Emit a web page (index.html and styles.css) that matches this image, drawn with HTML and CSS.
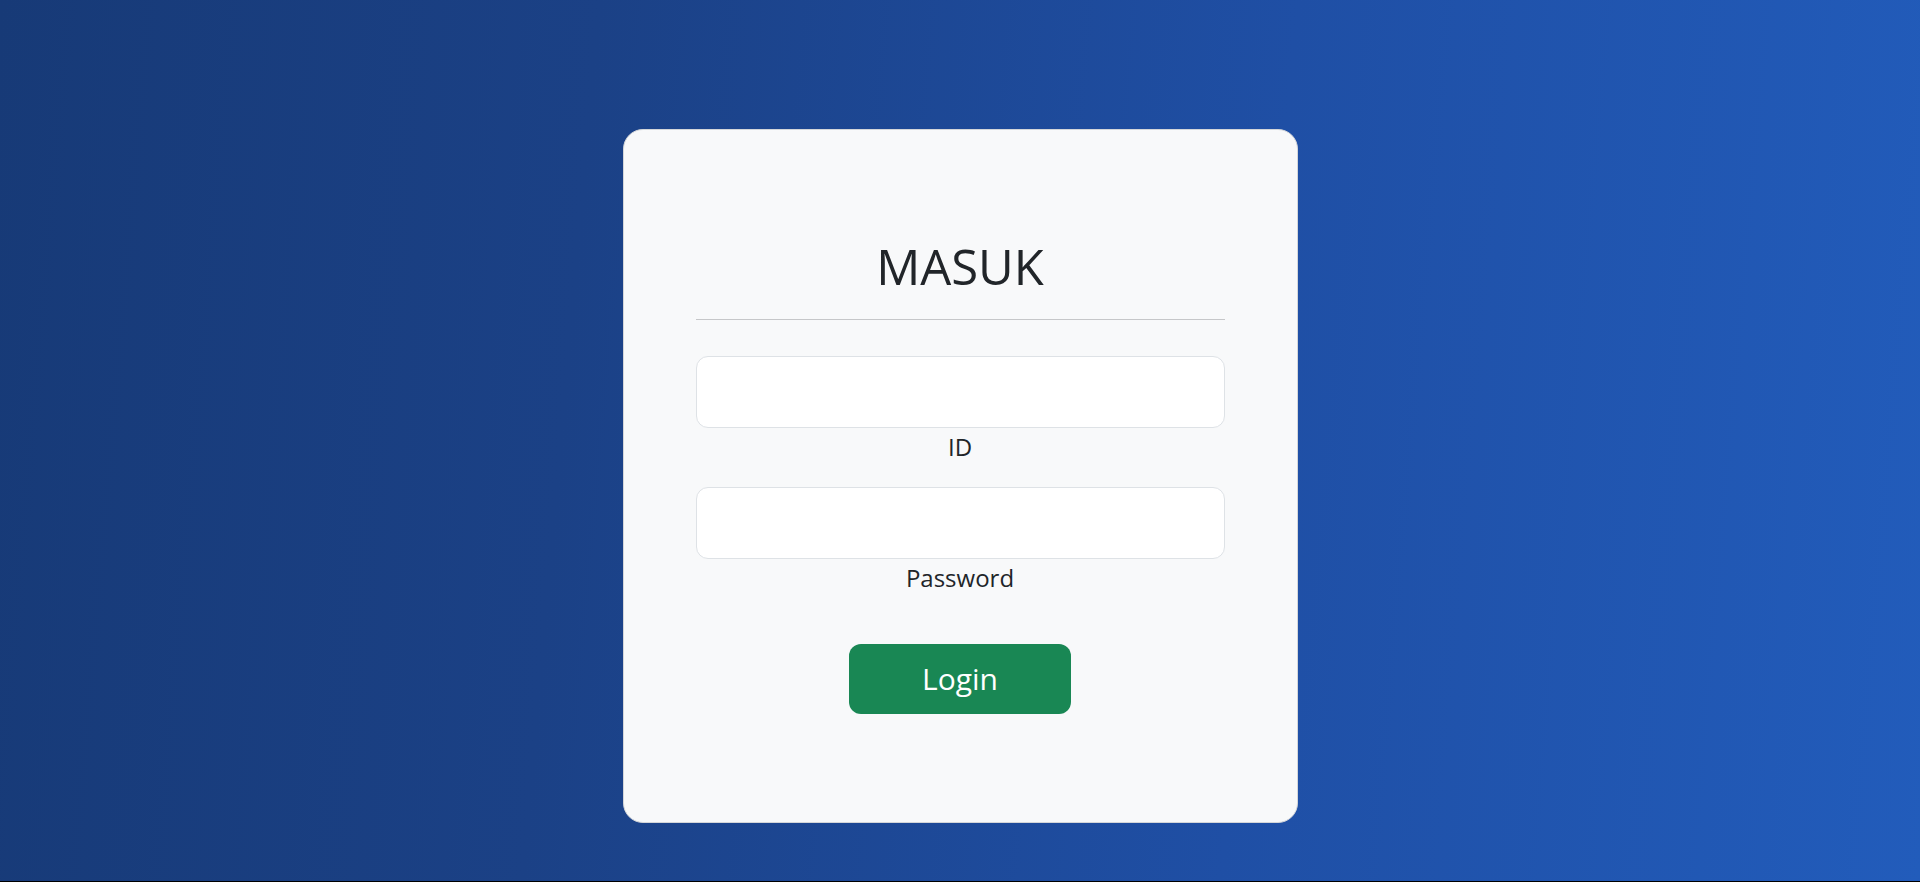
FILE: index.html
```html
<!DOCTYPE html>
<html lang="id">
<head>
<meta charset="utf-8">
<title>Masuk</title>
<link rel="stylesheet" href="styles.css">
</head>
<body>
<main class="page">
  <form class="card">
    <h2 class="title">MASUK</h2>
    <hr class="divider">
    <div class="field">
      <input class="input" type="text" id="uid">
      <label class="label" for="uid">ID</label>
    </div>
    <div class="field">
      <input class="input" type="password" id="pwd">
      <label class="label" for="pwd">Password</label>
    </div>
    <button class="btn" type="button">Login</button>
  </form>
</main>
</body>
</html>
```

FILE: styles.css
```css
html {
  background: #000;
}
body {
  margin: 0;
  font-family: "Open Sans", "Liberation Sans", sans-serif;
  color: #212529;
}
.page {
  height: 881px;
  background: linear-gradient(95deg, #173a77 0%, #1b4186 30%, #1f4fa5 65%, #225cbb 100%);
  display: flex;
  justify-content: center;
  align-items: flex-start;
  padding-top: 129px;
  box-sizing: border-box;
}
.card {
  box-sizing: border-box;
  width: 675px;
  height: 694px;
  background: #f8f9fa;
  border: 1px solid #d4d6d9;
  border-radius: 20px;
  padding: 107px 72px 0;
  display: flex;
  flex-direction: column;
  align-items: stretch;
}
.title {
  margin: 0;
  font-size: 49px;
  font-weight: 400;
  line-height: 1.2;
  text-align: center;
}
.divider {
  margin: 23px 0 36px;
  border: 0;
  border-top: 1px solid #c6c7c9;
  height: 0;
}
.field {
  display: flex;
  flex-direction: column;
  align-items: center;
  margin-bottom: 21px;
}
.field + .field {
  margin-bottom: 47px;
}
.input {
  box-sizing: border-box;
  width: 100%;
  height: 72px;
  background: #fff;
  border: 1px solid #dee2e6;
  border-radius: 12px;
  font: inherit;
  font-size: 24px;
  padding: 0 18px;
  outline: none;
}
.label {
  font-size: 24px;
  line-height: 38px;
}
.btn {
  align-self: center;
  width: 222px;
  height: 70px;
  background: #198754;
  border: 0;
  border-radius: 12px;
  color: #fff;
  font-family: inherit;
  font-size: 30px;
  line-height: 45px;
  padding: 0;
}
```
